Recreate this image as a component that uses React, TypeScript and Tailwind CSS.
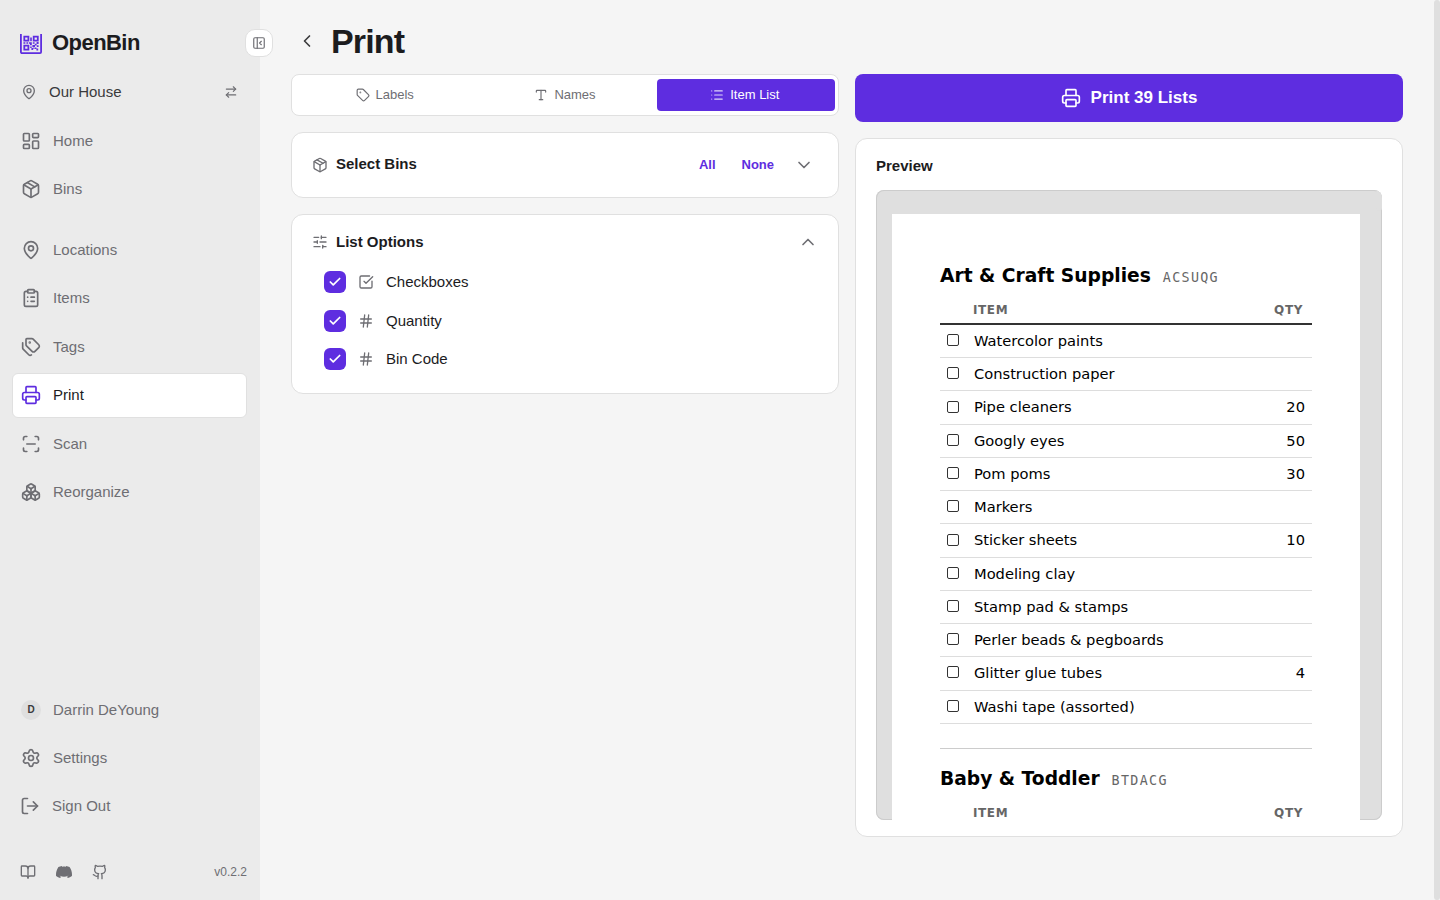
import React from "react";
import {
  ArrowRightLeft,
  BookOpen,
  Boxes,
  Check,
  ChevronDown,
  ChevronLeft,
  ChevronUp,
  ClipboardList,
  Github,
  Hash,
  LayoutDashboard,
  List,
  LogOut,
  MapPin,
  Package,
  PanelLeftClose,
  Printer,
  ScanLine,
  Settings,
  SlidersHorizontal,
  SquareCheckBig,
  Tag,
  Tags,
  Type,
  type LucideIcon,
} from "lucide-react";

function Logo() {
  return (
    <svg width="22" height="22" viewBox="0 -2 22 22" fill="none" stroke="#5e2de0" aria-hidden="true">
      <path d="M.9 0v18a1.1 1.1 0 0 0 1.1 1.1h18a1.1 1.1 0 0 0 1.1-1.1V0" strokeWidth="1.8" />
      <path d="M4.3 2.6h4.1v4.1H4.3zM13.7 2.6h4.1v4.1h-4.1zM4.3 11.6h4.1v4.1H4.3z" strokeWidth="1.8" />
      <path
        fill="#5e2de0"
        stroke="none"
        d="M10.2 3.4h1.6v3.8h-1.6zM3.4 8.2h2v1.5h-2zM6.4 8.2H8v1.5H6.4zM8.8 8.2h3v3H10V9.7H8.8zM12.8 8.2h1.8v1.6h-1.8zM16.6 8h2v2h-2zM10.2 12.4h1.5v1.7h-1.5zM11.4 14h1.8v2h-1.8zM12.4 11h2.6v2h-2.6zM14.8 9.8h1.8v1.7h-1.8zM16.8 11.2h1.8v1.9h-1.8zM14.4 13.4h2v1.5h-2zM16.4 14.6h1.8v1.8h-1.8zM12.8 13.4h1v1.4h-1z"
      />
    </svg>
  );
}

function DiscordIcon() {
  return (
    <svg width="16" height="16" viewBox="0 0 24 24" fill="currentColor" aria-hidden="true">
      <path d="M20.317 4.37a19.79 19.79 0 0 0-4.885-1.515.074.074 0 0 0-.079.037c-.21.375-.444.865-.608 1.25-1.845-.277-3.68-.277-5.487 0-.164-.394-.406-.875-.618-1.25a.077.077 0 0 0-.078-.037 19.736 19.736 0 0 0-4.885 1.515.07.07 0 0 0-.032.028C.533 9.046-.319 13.58.1 18.058a.082.082 0 0 0 .031.056c2.053 1.508 4.041 2.423 5.993 3.03a.078.078 0 0 0 .084-.028c.462-.63.873-1.295 1.226-1.994a.076.076 0 0 0-.042-.106c-.652-.248-1.274-.55-1.872-.892a.077.077 0 0 1-.007-.128c.126-.094.251-.192.371-.291a.074.074 0 0 1 .078-.01c3.928 1.793 8.18 1.793 12.061 0a.074.074 0 0 1 .079.009c.12.099.246.198.373.292a.077.077 0 0 1-.007.128 12.299 12.299 0 0 1-1.873.891.077.077 0 0 0-.04.107c.36.698.771 1.363 1.224 1.993a.076.076 0 0 0 .084.029c1.961-.607 3.95-1.522 6.003-3.03a.077.077 0 0 0 .031-.055c.5-5.177-.838-9.674-3.549-13.66a.061.061 0 0 0-.031-.029z" />
    </svg>
  );
}

type NavEntry = { label: string; icon: LucideIcon; active?: boolean };

const primaryNav: NavEntry[] = [
  { label: "Home", icon: LayoutDashboard },
  { label: "Bins", icon: Package },
];

const manageNav: NavEntry[] = [
  { label: "Locations", icon: MapPin },
  { label: "Items", icon: ClipboardList },
  { label: "Tags", icon: Tags },
  { label: "Print", icon: Printer, active: true },
  { label: "Scan", icon: ScanLine },
  { label: "Reorganize", icon: Boxes },
];

function NavLink({ label, icon: Icon, active }: NavEntry) {
  return (
    <a
      href="#"
      aria-current={active ? "page" : undefined}
      className={
        active
          ? "flex items-center gap-3 rounded-md border border-[#e0e0e0] bg-white px-2 py-2.5 leading-normal text-[#1c1c1e]"
          : "flex items-center gap-3 rounded-md border border-transparent px-2 py-2.5 leading-normal"
      }
    >
      <Icon size={20} className={active ? "text-[#5e2de0]" : ""} />
      {label}
    </a>
  );
}

function Sidebar() {
  return (
    <aside className="relative flex w-[260px] shrink-0 flex-col bg-[#ebebeb] pt-[29px] pr-[13px] pb-3.5 pl-3 text-[15px] text-[#6e6e73]">
      <button
        type="button"
        aria-label="Collapse sidebar"
        className="absolute top-[29px] -right-[13px] flex size-7 items-center justify-center rounded-[10px] border border-[#e0e0e0] bg-white"
      >
        <PanelLeftClose size={14} />
      </button>
      <div className="flex items-center gap-2.5 px-2">
        <Logo />
        <span className="text-[22px] leading-7 font-bold tracking-tight text-[#1c1c1e]">OpenBin</span>
      </div>
      <button type="button" className="mt-4 flex items-center gap-3 py-2 pr-[9px] pl-[9px] leading-normal text-[#3a3a3c]">
        <MapPin size={16} className="text-[#6e6e73]" />
        Our House
        <ArrowRightLeft size={14} className="ml-auto text-[#6e6e73]" />
      </button>
      <nav aria-label="Main" className="mt-[7px] flex flex-col gap-4">
        <div className="flex flex-col gap-1">
          {primaryNav.map((entry) => (
            <NavLink key={entry.label} {...entry} />
          ))}
        </div>
        <div className="flex flex-col gap-1">
          {manageNav.map((entry) => (
            <NavLink key={entry.label} {...entry} />
          ))}
        </div>
      </nav>
      <div className="mt-auto flex flex-col gap-1">
        <a href="#" className="flex items-center gap-3 border border-transparent px-2 py-2.5 leading-normal">
          <span className="flex size-5 items-center justify-center rounded-full bg-[#dfdfdf] text-[10px] font-bold text-[#3a3a3c]">
            D
          </span>
          Darrin DeYoung
        </a>
        <NavLink label="Settings" icon={Settings} />
        <button type="button" className="flex items-center gap-3 px-2 py-2.5 leading-normal">
          <LogOut size={20} />
          Sign Out
        </button>
      </div>
      <div className="mt-[31px] flex items-center gap-5 pl-2">
        <a href="#" aria-label="Documentation">
          <BookOpen size={16} />
        </a>
        <a href="#" aria-label="Discord">
          <DiscordIcon />
        </a>
        <a href="#" aria-label="GitHub">
          <Github size={16} />
        </a>
        <span className="ml-auto text-xs leading-7">v0.2.2</span>
      </div>
    </aside>
  );
}

const tabs: NavEntry[] = [
  { label: "Labels", icon: Tag },
  { label: "Names", icon: Type },
  { label: "Item List", icon: List, active: true },
];

function FormatTabs() {
  return (
    <div
      role="tablist"
      className="grid grid-cols-3 gap-0.5 rounded-lg border border-[#e0e0e0] bg-white py-1 pr-[3px] pl-1 text-[13px]"
    >
      {tabs.map(({ label, icon: Icon, active }) => (
        <button
          key={label}
          type="button"
          role="tab"
          aria-selected={!!active}
          className={
            active
              ? "flex h-8 items-center justify-center gap-1.5 rounded-[4px] bg-[#5e2de0] pr-0.5 text-white"
              : "flex h-8 items-center justify-center gap-1.5 rounded-[4px] pr-px text-[#6e6e73]"
          }
        >
          <Icon size={14} className={active ? "opacity-80" : ""} />
          {label}
        </button>
      ))}
    </div>
  );
}

const options: { label: string; icon: LucideIcon }[] = [
  { label: "Checkboxes", icon: SquareCheckBig },
  { label: "Quantity", icon: Hash },
  { label: "Bin Code", icon: Hash },
];

function OptionRow({ label, icon: Icon }: { label: string; icon: LucideIcon }) {
  return (
    <label className="flex items-center gap-3 px-3 py-2 leading-normal">
      <span className="relative flex size-[22px]">
        <input type="checkbox" defaultChecked className="size-[22px] appearance-none rounded-md bg-[#5e2de0]" />
        <Check size={14} strokeWidth={3} className="pointer-events-none absolute inset-1 text-white" />
      </span>
      <Icon size={16} className="text-[#6e6e73]" />
      {label}
    </label>
  );
}

const craftItems: { name: string; qty?: number }[] = [
  { name: "Watercolor paints" },
  { name: "Construction paper" },
  { name: "Pipe cleaners", qty: 20 },
  { name: "Googly eyes", qty: 50 },
  { name: "Pom poms", qty: 30 },
  { name: "Markers" },
  { name: "Sticker sheets", qty: 10 },
  { name: "Modeling clay" },
  { name: "Stamp pad & stamps" },
  { name: "Perler beads & pegboards" },
  { name: "Glitter glue tubes", qty: 4 },
  { name: "Washi tape (assorted)" },
];

function BinList({ name, code, items }: { name: string; code: string; items: { name: string; qty?: number }[] }) {
  return (
    <section>
      <h2 className="flex items-baseline gap-3 text-[14pt] leading-[26px] font-bold">
        {name}
        <span className="font-['DejaVu_Sans_Mono',monospace] text-[10pt] font-normal tracking-widest text-[#666]">
          {code}
        </span>
      </h2>
      <table className="mt-[7px] w-full border-separate border-spacing-0 text-[11pt] leading-[1.38]">
        <thead>
          <tr className="text-[9pt] leading-4 tracking-wider text-[#666]">
            <th className="w-[26px] border-b-2 border-[#333]" aria-label="Done" />
            <th className="border-b-2 border-[#333] px-[7px] pt-1 pb-[5px] text-left">ITEM</th>
            <th className="w-20 border-b-2 border-[#333] pt-1 pr-[9px] pb-[5px] text-right">QTY</th>
          </tr>
        </thead>
        <tbody>
          {items.map((item) => (
            <tr key={item.name}>
              <td className="border-b border-[#ddd] p-0 pb-0.5">
                <span className="flex justify-center">
                  <input
                    type="checkbox"
                    aria-label={item.name}
                    className="size-3 appearance-none rounded-[2px] border border-[#333]"
                  />
                </span>
              </td>
              <td className="border-b border-[#ddd] px-2 py-1.5">{item.name}</td>
              <td className="border-b border-[#ddd] py-1.5 pr-[7px] text-right">{item.qty}</td>
            </tr>
          ))}
        </tbody>
      </table>
    </section>
  );
}

export default function App() {
  return (
    <div className="relative flex min-h-screen bg-[#f5f5f5] pr-1.5 font-['Liberation_Sans',Arial,sans-serif] text-[#1c1c1e]">
      <Sidebar />
      <main className="min-w-0 flex-1 px-[31px] pt-5">
        <header className="flex items-center gap-2">
          <button type="button" aria-label="Back" className="flex size-8 items-center justify-center text-[#3a3a3c]">
            <ChevronLeft size={20} />
          </button>
          <h1 className="text-[34px] leading-[42px] font-bold tracking-tight">Print</h1>
        </header>
        <div className="mt-3 grid grid-cols-2 items-start gap-4">
          <div className="flex flex-col gap-4">
            <FormatTabs />
            <section className="flex items-center rounded-xl border border-[#e0e0e0] bg-white px-5 py-4 text-[15px]">
              <Package size={16} className="text-[#6e6e73]" />
              <h2 className="ml-2 pb-0.5 leading-[30px] font-bold">Select Bins</h2>
              <div className="ml-auto flex items-center text-[13px] leading-8 font-bold text-[#5e2de0]">
                <button type="button" className="px-[13px]">
                  All
                </button>
                <button type="button" className="px-[13px]">
                  None
                </button>
              </div>
              <button type="button" aria-label="Expand bins" className="mr-1 ml-[7px] text-[#6e6e73]">
                <ChevronDown size={20} />
              </button>
            </section>
            <section className="rounded-xl border border-[#e0e0e0] bg-white px-5 pt-[15px] pb-3.5 text-[15px]">
              <div className="flex items-center leading-6">
                <SlidersHorizontal size={16} className="text-[#6e6e73]" />
                <h2 className="ml-2 font-bold">List Options</h2>
                <button type="button" aria-label="Collapse options" className="ml-auto text-[#6e6e73]">
                  <ChevronUp size={20} />
                </button>
              </div>
              <div className="mt-[9px]">
                {options.map((option) => (
                  <OptionRow key={option.label} {...option} />
                ))}
              </div>
            </section>
          </div>
          <div className="flex flex-col gap-4">
            <button
              type="button"
              className="flex h-12 items-center justify-center gap-2.5 rounded-lg bg-[#5e2de0] text-[17px] font-bold text-white"
            >
              <Printer size={20} />
              Print 39 Lists
            </button>
            <section className="rounded-xl border border-[#e0e0e0] bg-white px-5 py-4">
              <h2 className="text-[15px] leading-[22px] font-bold">Preview</h2>
              <div className="relative mt-[13px] h-[70vh] overflow-hidden rounded-lg bg-[#dfdfdf] py-6 pr-[22px] pl-4 inset-ring inset-ring-[#cccccc]">
                <div className="bg-white px-12 pt-[49px] pb-12 font-['DejaVu_Sans',sans-serif] text-black">
                  <BinList name="Art & Craft Supplies" code="ACSUQG" items={craftItems} />
                  <hr className="mt-6 mb-[17px] border-[#ccc]" />
                  <BinList name="Baby & Toddler" code="BTDACG" items={[]} />
                </div>
                <div aria-hidden="true" className="absolute top-0 right-0 h-[21px] w-1.5 rounded-full bg-[#dfdfdf]" />
              </div>
            </section>
          </div>
        </div>
      </main>
      <div aria-hidden="true" className="absolute inset-y-0 right-0 w-1.5 rounded-full bg-[#dfdfdf]" />
    </div>
  );
}
